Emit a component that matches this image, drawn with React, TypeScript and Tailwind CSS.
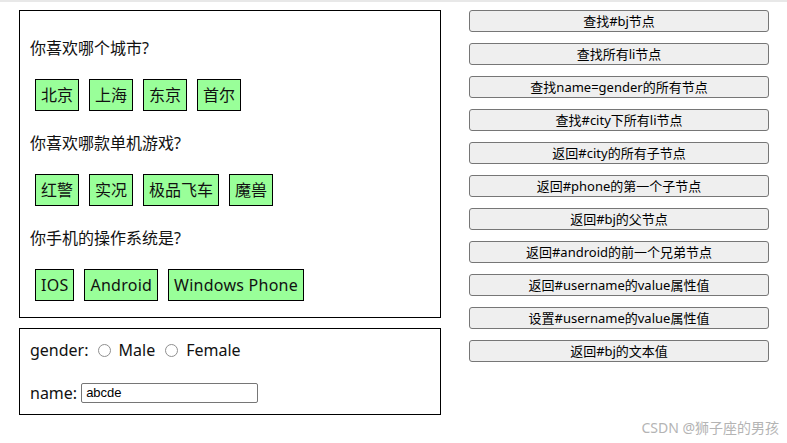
import React from 'react';

const FONT = '"Noto Sans", "Noto Sans CJK SC", sans-serif';

const cities = ['北京', '上海', '东京', '首尔'];
const games = ['红警', '实况', '极品飞车', '魔兽'];
const phones = ['IOS', 'Android', 'Windows Phone'];

const actions = [
  '查找#bj节点',
  '查找所有li节点',
  '查找name=gender的所有节点',
  '查找#city下所有li节点',
  '返回#city的所有子节点',
  '返回#phone的第一个子节点',
  '返回#bj的父节点',
  '返回#android的前一个兄弟节点',
  '返回#username的value属性值',
  '设置#username的value属性值',
  '返回#bj的文本值',
];

// one question line + its row of green "li" tiles
const Question: React.FC<{ title: string; items: string[]; first?: boolean; latin?: boolean }> = ({
  title,
  items,
  first,
  latin,
}) => (
  <div className={first ? '' : 'mt-[20px]'}>
    <p className="text-[16px] leading-[24px] text-[#111]">{title}</p>
    <ul className="mt-[19px] ml-[5px] flex gap-[10px]">
      {items.map((item) => (
        <li
          key={item}
          className={
            latin
              ? 'border border-black bg-[#99ff99] px-[5px] py-[5px] text-[16px] leading-[20px] text-[#111] tracking-[0.25px]'
              : 'border border-black bg-[#99ff99] px-[5px] py-[5px] text-[16px] leading-[20px] text-[#111]'
          }
        >
          {item}
        </li>
      ))}
    </ul>
  </div>
);

const Radio: React.FC = () => (
  <span className="inline-block w-[13px] h-[13px] rounded-full border border-[#8f8f8f] bg-white" />
);

const App: React.FC = () => {
  return (
    <div className="relative w-full h-[443px] bg-white border-t-2 border-[#e8e8e8] overflow-hidden" style={{ fontFamily: FONT }}>
      <div className="flex items-start pt-[8px]">
        <div className="ml-[19px] w-[422px] flex flex-col gap-[10px]">
          <div className="border border-black px-[10px] pt-[25px] pb-[16px]">
            <Question title="你喜欢哪个城市?" items={cities} first />
            <Question title="你喜欢哪款单机游戏?" items={games} />
            <Question title="你手机的操作系统是?" items={phones} latin />
          </div>
          <div className="border border-black px-[10px] pt-[9px] pb-[9px] text-[16px] leading-[24px] text-[#111]">
            <div className="flex items-center">
              <span>gender:</span>
              <span className="ml-[9px] mr-[8px] flex"><Radio /></span>
              <span>Male</span>
              <span className="ml-[10px] mr-[8px] flex"><Radio /></span>
              <span>Female</span>
            </div>
            <div className="mt-[19px] flex items-center">
              <span>name:</span>
              <input
                readOnly
                defaultValue="abcde"
                className="ml-[4px] w-[177px] h-[20px] border border-[#767676] rounded-[2px] px-[4px] text-[13px] text-black outline-none"
                style={{ fontFamily: '"Liberation Sans", Arial, sans-serif' }}
              />
            </div>
          </div>
        </div>

        <div className="ml-[28px] w-[300px] flex flex-col gap-[11px]">
          {actions.map((a) => (
            <button
              key={a}
              className="h-[22px] w-full border border-[#767676] rounded-[3px] bg-[#efefef] text-[13px] leading-[20px] text-black"
            >
              {a}
            </button>
          ))}
        </div>
      </div>

      <div className="absolute right-[8px] bottom-[5px] text-[14px] leading-[20px] text-[#b4b4b4]">
        CSDN @狮子座的男孩
      </div>
    </div>
  );
};

export default App;
